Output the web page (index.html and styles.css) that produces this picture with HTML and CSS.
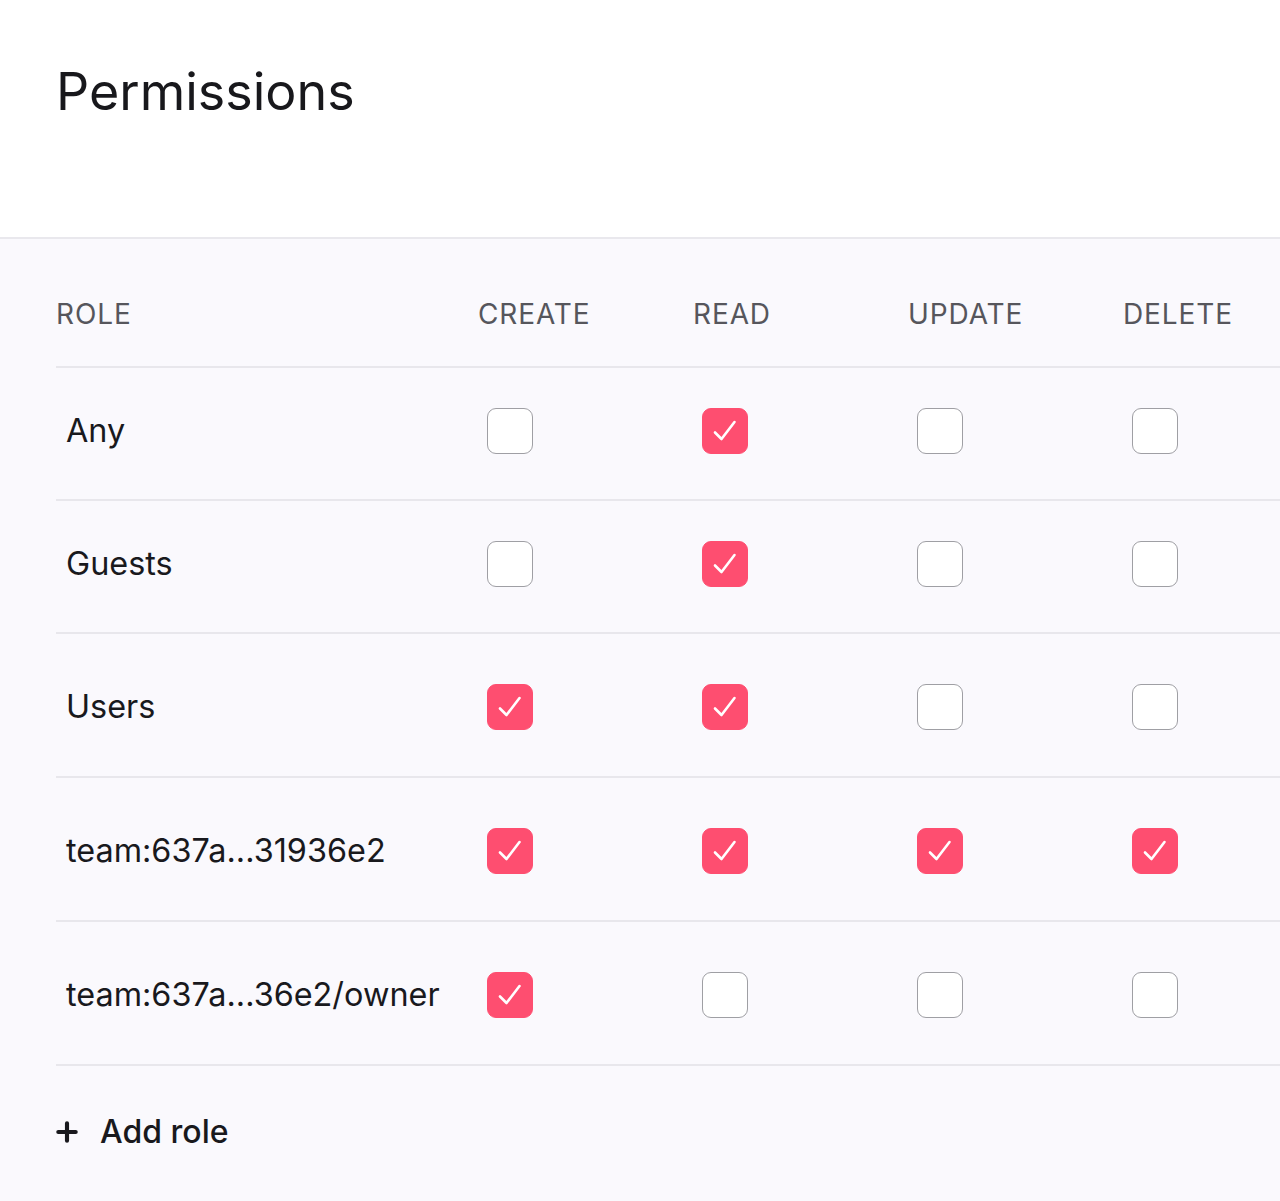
FILE: index.html
```html
<!DOCTYPE html>
<html lang="en">
<head>
<meta charset="utf-8">
<title>Permissions</title>
<link rel="stylesheet" href="styles.css">
</head>
<body>
<header class="top">
  <h1 class="title">Permissions</h1>
</header>
<section class="panel">
  <div class="grid head">
    <div class="hcell">ROLE</div>
    <div class="hcell">CREATE</div>
    <div class="hcell">READ</div>
    <div class="hcell">UPDATE</div>
    <div class="hcell">DELETE</div>
  </div>

  <div class="grid row compact">
    <div class="role">Any</div>
    <div class="cell"><span class="cb"></span></div>
    <div class="cell"><span class="cb on"><svg viewBox="0 0 46 46"><path d="M13 24.5 L19.5 31 L32.5 14"/></svg></span></div>
    <div class="cell"><span class="cb"></span></div>
    <div class="cell"><span class="cb"></span></div>
  </div>

  <div class="grid row compact">
    <div class="role">Guests</div>
    <div class="cell"><span class="cb"></span></div>
    <div class="cell"><span class="cb on"><svg viewBox="0 0 46 46"><path d="M13 24.5 L19.5 31 L32.5 14"/></svg></span></div>
    <div class="cell"><span class="cb"></span></div>
    <div class="cell"><span class="cb"></span></div>
  </div>

  <div class="grid row">
    <div class="role">Users</div>
    <div class="cell"><span class="cb on"><svg viewBox="0 0 46 46"><path d="M13 24.5 L19.5 31 L32.5 14"/></svg></span></div>
    <div class="cell"><span class="cb on"><svg viewBox="0 0 46 46"><path d="M13 24.5 L19.5 31 L32.5 14"/></svg></span></div>
    <div class="cell"><span class="cb"></span></div>
    <div class="cell"><span class="cb"></span></div>
  </div>

  <div class="grid row">
    <div class="role">team:637a...31936e2</div>
    <div class="cell"><span class="cb on"><svg viewBox="0 0 46 46"><path d="M13 24.5 L19.5 31 L32.5 14"/></svg></span></div>
    <div class="cell"><span class="cb on"><svg viewBox="0 0 46 46"><path d="M13 24.5 L19.5 31 L32.5 14"/></svg></span></div>
    <div class="cell"><span class="cb on"><svg viewBox="0 0 46 46"><path d="M13 24.5 L19.5 31 L32.5 14"/></svg></span></div>
    <div class="cell"><span class="cb on"><svg viewBox="0 0 46 46"><path d="M13 24.5 L19.5 31 L32.5 14"/></svg></span></div>
  </div>

  <div class="grid row">
    <div class="role">team:637a...36e2/owner</div>
    <div class="cell"><span class="cb on"><svg viewBox="0 0 46 46"><path d="M13 24.5 L19.5 31 L32.5 14"/></svg></span></div>
    <div class="cell"><span class="cb"></span></div>
    <div class="cell"><span class="cb"></span></div>
    <div class="cell"><span class="cb"></span></div>
  </div>

  <div class="add">
    <svg class="plus" viewBox="0 0 24 24"><path d="M12 2.5 V21.5 M2.5 12 H21.5"/></svg>
    <span>Add role</span>
  </div>
</section>
</body>
</html>
```

FILE: styles.css
```css
html, body {
  margin: 0;
  padding: 0;
}
body {
  width: 1280px;
  height: 1201px;
  overflow: hidden;
  background: #faf9fd;
  font-family: Inter, "Noto Sans", sans-serif;
  color: #19191d;
}
.top {
  background: #ffffff;
  height: 239px;
  box-sizing: border-box;
  padding: 60px 0 0 56px;
  border-bottom: 2px solid #e9e8ed;
}
.title {
  margin: 0;
  font-size: 52px;
  line-height: 64px;
  font-weight: 400;
  letter-spacing: 0;
  color: #18181c;
}
.panel {
  padding-left: 56px;
  overflow: hidden;
}
.grid {
  display: grid;
  grid-template-columns: 422px 215px 215px 215px 215px;
  width: 1282px;
}
.head {
  padding: 57px 0 34px;
}
.hcell {
  font-size: 28px;
  line-height: 36px;
  letter-spacing: 0.9px;
  color: #56565c;
  font-weight: 400;
}
.row {
  border-top: 2px solid #e8e7ec;
  align-items: center;
  padding: 50px 0 46px;
}
.row.compact {
  padding: 40px 0 45px;
}
.role {
  padding-left: 10px;
  font-size: 32.4px;
  line-height: 46px;
  color: #19191d;
}
.cell {
  padding-left: 9px;
  display: flex;
}
.cb {
  width: 46px;
  height: 46px;
  box-sizing: border-box;
  border: 1.5px solid #9f9fa4;
  border-radius: 9px;
  background: #ffffff;
  display: block;
}
.cb.on {
  background: #fe4e70;
  border-color: #fe4e70;
}
.cb svg {
  width: 46px;
  height: 46px;
  display: block;
  margin: -1.5px;
}
.cb svg path {
  fill: none;
  stroke: #ffffff;
  stroke-width: 2.6;
  stroke-linecap: round;
  stroke-linejoin: round;
}
.add {
  border-top: 2px solid #e8e7ec;
  width: 1224px;
  display: flex;
  align-items: center;
  gap: 22px;
  padding-top: 48px;
  font-size: 32px;
  line-height: 36px;
  font-weight: 500;
  color: #19191d;
}
.plus {
  width: 22px;
  height: 22px;
  display: block;
}
.plus path {
  stroke: #19191d;
  stroke-width: 4.5;
  stroke-linecap: round;
  fill: none;
}
```
